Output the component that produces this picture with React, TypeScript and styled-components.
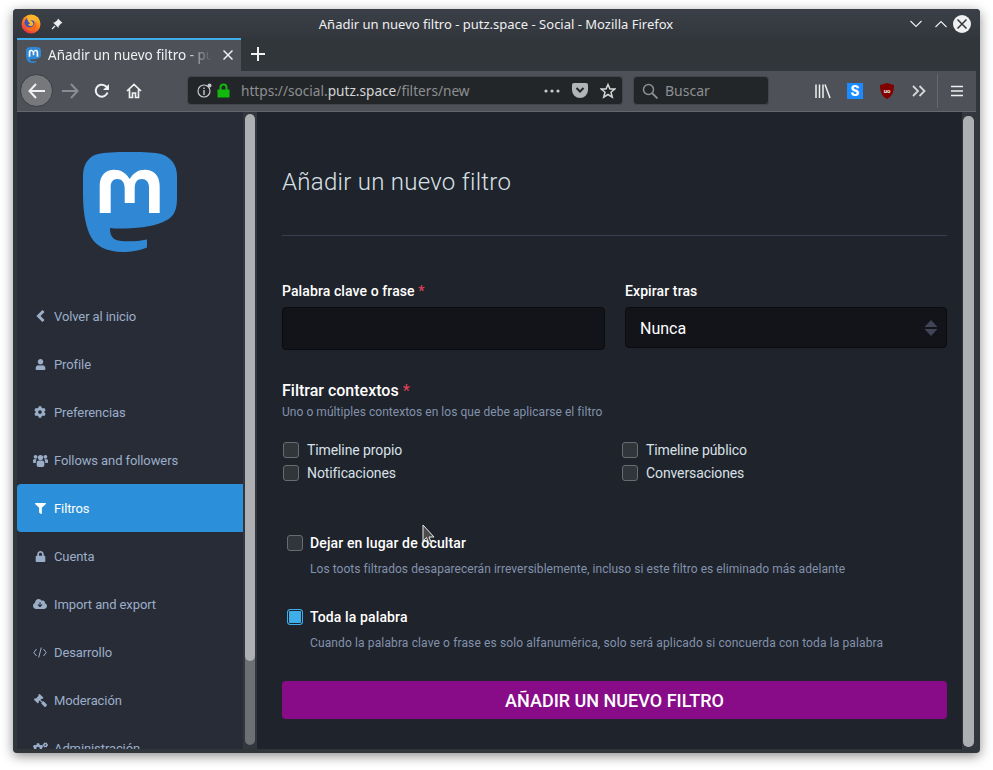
import React from 'react'
import styled, { createGlobalStyle } from 'styled-components'
import { FaCog, FaCogs, FaFilter, FaGavel, FaLock, FaUser } from 'react-icons/fa'
import { FaCloudArrowDown } from 'react-icons/fa6'

const GlobalStyle = createGlobalStyle`
  html, body {
    margin: 0;
    padding: 0;
    background: #fff;
    height: 770px;
    overflow: hidden;
  }
  * { box-sizing: border-box; }
`

const Page = styled.div`
  padding: 9px 13px 17px;
  height: 770px;
  position: relative;
`

const Window = styled.div`
  width: 967px;
  height: 744px;
  display: flex;
  flex-direction: column;
  background: #31363b;
  border-radius: 4px;
  box-shadow: 0 3px 12px rgba(0, 0, 0, 0.45);
  overflow: hidden;
  font-family: Roboto, sans-serif;
`

const TitleBar = styled.div`
  height: 29px;
  flex: none;
  display: flex;
  align-items: center;
  padding: 0 9px 0 8px;
  background: linear-gradient(#3b3f47, #33373d);
  position: relative;
`

const TitleText = styled.div`
  flex: 1;
  text-align: center;
  color: #eff0f1;
  font: 13px 'Noto Sans', sans-serif;
  padding-left: 8px;
  padding-top: 1px;
`

const TitleLeft = styled.div`
  width: 60px;
  display: flex;
  align-items: center;
  gap: 10px;
`

const TitleRight = styled.div`
  width: 68px;
  display: flex;
  align-items: center;
  justify-content: flex-end;
  gap: 6px;
`

const TabStrip = styled.div`
  height: 33px;
  flex: none;
  padding: 0 4px;
  display: flex;
  align-items: stretch;
`

const Tab = styled.div`
  width: 224px;
  background: #4e5157;
  border-top: 2px solid #3daee9;
  display: flex;
  align-items: center;
  padding: 0 8px 2px 9px;
  gap: 7px;
`

const TabTitle = styled.div`
  flex: 1;
  overflow: hidden;
  white-space: nowrap;
  color: #eff0f1;
  font: 13.5px 'Noto Sans', sans-serif;
  margin-right: 4px;
  -webkit-mask-image: linear-gradient(90deg, #000 84%, transparent 100%);
  mask-image: linear-gradient(90deg, #000 84%, transparent 100%);
`

const NewTab = styled.div`
  width: 34px;
  display: flex;
  align-items: center;
  justify-content: center;
  padding-bottom: 2px;
`

const Toolbar = styled.div`
  height: 41px;
  flex: none;
  margin: 0 4px;
  background: #4e5157;
  border-bottom: 1px solid #63666b;
  display: flex;
  align-items: center;
  padding: 0 0 1px 3px;
`

const BackButton = styled.div`
  width: 33px;
  height: 33px;
  margin-right: 1px;
  border-radius: 50%;
  background: #76787c;
  border: 1px solid #3a3d42;
  display: flex;
  align-items: center;
  justify-content: center;
  flex: none;
`

const NavButton = styled.div<{ $width: number }>`
  width: ${p => p.$width}px;
  flex: none;
  display: flex;
  align-items: center;
  justify-content: center;
`

const UrlBar = styled.div`
  width: 436px;
  height: 29px;
  margin-left: 37px;
  flex: none;
  background: #232629;
  border: 1px solid #43464b;
  border-radius: 4px;
  display: flex;
  align-items: center;
  padding: 0 6px 0 9px;
  font: 13.65px 'Noto Sans', sans-serif;
  color: #8d8f92;
`

const UrlText = styled.div`
  flex: 1;
  margin-left: 11px;
  white-space: nowrap;
`

const UrlHost = styled.span`
  color: #d4d5d6;
`

const SearchBar = styled.div`
  width: 136px;
  height: 29px;
  margin-left: 10px;
  flex: none;
  background: #232629;
  border: 1px solid #43464b;
  border-radius: 4px;
  display: flex;
  align-items: center;
  gap: 7px;
  padding-left: 8px;
  font: 14px 'Noto Sans', sans-serif;
  color: #8d8f92;
`

const ToolIcons = styled.div`
  margin-left: 38px;
  display: flex;
  align-items: center;
`

const ToolDivider = styled.div`
  width: 1px;
  height: 34px;
  background: #65686d;
  margin-left: 2px;
`

const Content = styled.div`
  flex: 1;
  min-height: 0;
  margin: 0 4px 4px;
  display: flex;
`

const Sidebar = styled.nav`
  width: 226px;
  flex: none;
  background: #282c37;
  overflow: hidden;
  display: flex;
  flex-direction: column;
  align-items: stretch;
`

const LogoWrap = styled.div`
  height: 180px;
  flex: none;
  padding: 40px 0 0 66px;
`

const NavItem = styled.div<{ $active?: boolean }>`
  height: 48px;
  flex: none;
  display: flex;
  align-items: center;
  padding-left: 15px;
  border-radius: ${p => (p.$active ? '4px 0 0 4px' : '0')};
  background: ${p => (p.$active ? '#2b90d9' : 'transparent')};
  color: ${p => (p.$active ? '#fff' : '#9baec8')};
  font-size: 13px;
  letter-spacing: -0.1px;
`

const NavIcon = styled.span`
  width: 16px;
  margin-right: 6px;
  display: flex;
  justify-content: center;
  font-size: 13px;
`

const MirroredIcon = styled.span`
  display: flex;
  transform: scaleX(-1);
`

const ScrollTrack = styled.div<{ $bg: string; $pad: string; $width: number }>`
  width: ${p => p.$width}px;
  flex: none;
  background: ${p => p.$bg};
  padding: ${p => p.$pad};
  display: flex;
`

const ScrollRail = styled.div`
  flex: 1;
  background: #6c6f73;
  border-radius: 5px;
  overflow: hidden;
  margin-bottom: 2px;
`

const ScrollThumb = styled.div<{ $height: string }>`
  height: ${p => p.$height};
  background: #aeafb3;
  border-radius: 5px;
`

const Main = styled.main`
  flex: 1;
  min-width: 0;
  background: #1f232b;
  padding: 0 15px 0 25px;
`

const Heading = styled.h2`
  margin: 0;
  height: 124px;
  padding-top: 56px;
  border-bottom: 1px solid #393f4f;
  font-size: 24px;
  line-height: 28px;
  font-weight: 300;
  color: #d9e1e8;
  letter-spacing: 0.28px;
`

const FieldRow = styled.div`
  display: grid;
  grid-template-columns: 323px 322px;
  column-gap: 20px;
  margin-top: 46px;
`

const Field = styled.div`
  display: flex;
  flex-direction: column;
`

const FieldLabel = styled.label`
  font-size: 14px;
  line-height: 18px;
  font-weight: 500;
  color: #fff;
  margin-bottom: 7px;
  letter-spacing: 0.1px;
`

const Required = styled.span`
  color: #df405a;
`

const TextInput = styled.div`
  height: 43px;
  background: #131419;
  border: 1px solid #0a0b0e;
  border-radius: 4px;
`

const SelectBox = styled.div`
  height: 41px;
  background: #131419;
  border: 1px solid #0a0b0e;
  border-radius: 4px;
  display: flex;
  align-items: center;
  justify-content: space-between;
  padding: 0 8px 0 14px;
  font-size: 16px;
  line-height: 41px;
  color: #fff;
`

const SelectValue = styled.span`
  padding-top: 1px;
`

const GroupTitle = styled.div`
  margin-top: 31px;
  font-size: 16px;
  line-height: 19px;
  font-weight: 500;
  color: #fff;
`

const Hint = styled.div<{ $spacing?: number }>`
  font-size: 12px;
  line-height: 16px;
  color: #8292ab;
  letter-spacing: ${p => p.$spacing ?? 0}px;
`

const GroupHint = styled(Hint)`
  margin-top: 4px;
`

const CheckGrid = styled.div`
  margin-top: 21px;
  margin-left: 1px;
  display: grid;
  grid-template-columns: 339px 1fr;
  row-gap: 5px;
`

const CheckLabel = styled.div`
  display: flex;
  align-items: center;
  height: 18px;
  font-size: 14px;
  letter-spacing: -0.1px;
  color: #d9e1e8;
  gap: 8px;
`

const Box = styled.span<{ $checked?: boolean }>`
  width: 16px;
  height: 16px;
  flex: none;
  border-radius: 3px;
  border: 1px solid ${p => (p.$checked ? '#3daee9' : '#686b70')};
  background: ${p => (p.$checked ? '#3daee9' : '#31363b')};
  box-shadow: ${p => (p.$checked ? 'inset 0 0 0 1px #1f232b' : 'none')};
`

const Option = styled.div<{ $top: number }>`
  margin: ${p => p.$top}px 0 0 5px;
`

const OptionLabel = styled.div`
  display: flex;
  align-items: center;
  gap: 7px;
  height: 18px;
  font-size: 14px;
  font-weight: 500;
  color: #fff;
  letter-spacing: 0.13px;
`

const OptionHint = styled(Hint)`
  margin: 9px 0 0 23px;
  white-space: nowrap;
`

const SubmitButton = styled.div`
  margin-top: 30px;
  height: 38px;
  border-radius: 4px;
  background: #880b88;
  color: #fff;
  font-size: 18px;
  font-weight: 500;
  display: flex;
  align-items: center;
  justify-content: center;
`

const Cursor = styled.svg`
  position: absolute;
  left: 422px;
  top: 524px;
`

const MastodonLogo = ({ size }: { size: number }) => (
  <svg width={size * 0.94} height={size} viewBox="0 0 94 100">
    <path
      fill="#3088d4"
      d="M47 0C62 0 72 .5 78 2C88 5 94 13 94 24V46C94 58 91 64 84 68C74 74 58 76 42 76.500C36 76.700 31 76.500 27 76C27 83 29 87 35 88.500C44 90 54 89.500 64 87.500V95.500C55 99 47 100 40 100C24 100 11 94 6 81C2 71 0 58 0 42V24C0 12 6 4 15 2C22 .5 32 0 47 0Z"
    />
    <path
      fill="#fff"
      d="M16.700 61V34C16.700 23 23 17.700 31 17.700C38 17.700 43 21 46.700 27C50.400 21 55 17.700 62 17.700C70 17.700 76.700 23 76.700 34V61H66V35C66 30 63 27 59 27C54 27 51.700 30 51.700 37V51H41.700V37C41.700 30 39 27 34 27C30 27 27.700 30 27.700 35V61Z"
    />
  </svg>
)

const FirefoxLogo = () => (
  <svg width="20" height="20" viewBox="0 0 20 20">
    <defs>
      <linearGradient id="fx" x1="0.8" y1="0" x2="0.2" y2="1">
        <stop offset="0" stopColor="#ffd02d" />
        <stop offset="0.5" stopColor="#ff7a1c" />
        <stop offset="1" stopColor="#e5264a" />
      </linearGradient>
    </defs>
    <circle cx="10" cy="10" r="9.500" fill="url(#fx)" />
    <circle cx="8.500" cy="8.500" r="5" fill="#3f55b5" />
    <path fill="#ffb52b" d="M6 2C10 1 15 4 15.500 9C14 7 11.500 6 9.500 6.500C11.500 7.500 13 9 12 11C10.500 13 7.500 12 7 10C8 10.500 9 10 9 9C7 8.500 6 5 6 2Z" />
    <path fill="#f36a1f" d="M5 13C9 16 14.500 13 14.500 8C17 12 14 17.500 9.500 17C7 16.500 5.500 15 5 13Z" />
  </svg>
)

const BackChevron = () => (
  <svg width="9" height="12" viewBox="0 0 9 12">
    <path fill="none" stroke="currentColor" strokeWidth="3" d="M7.500 1L2.500 6L7.500 11" />
  </svg>
)

const GroupIcon = () => (
  <svg width="15" height="13" viewBox="0 0 15 13">
    <g fill="currentColor">
      <circle cx="7.500" cy="3.600" r="2.600" />
      <circle cx="2.600" cy="2.800" r="1.900" />
      <circle cx="12.400" cy="2.800" r="1.900" />
      <path d="M3.700 8.500C3.700 7 5 6.500 7.500 6.500C10 6.500 11.300 7 11.300 8.500V11.500C11.300 12.500 10 13 7.500 13C5 13 3.700 12.500 3.700 11.500Z" />
      <path d="M0 6.500C0 5.500 1 5 3.800 5.500C3 6.500 2.700 7.500 2.700 9H1C.3 9 0 8.500 0 8Z" />
      <path d="M15 6.500C15 5.500 14 5 11.200 5.500C12 6.500 12.300 7.500 12.300 9H14C14.700 9 15 8.500 15 8Z" />
    </g>
  </svg>
)

const CodeIcon = () => (
  <svg width="14" height="11" viewBox="0 0 14 11">
    <path fill="none" stroke="currentColor" strokeWidth="1" d="M3.500 2L.8 5.500L3.500 9M10.500 2L13.200 5.500L10.500 9M8.300 .5L5.700 10.500" />
  </svg>
)

const navItems = [
  { label: 'Volver al inicio', icon: <BackChevron /> },
  { label: 'Profile', icon: <FaUser size={11} /> },
  { label: 'Preferencias', icon: <FaCog size={12} /> },
  { label: 'Follows and followers', icon: <GroupIcon /> },
  { label: 'Filtros', icon: <FaFilter size={11} />, active: true },
  { label: 'Cuenta', icon: <FaLock size={11} /> },
  { label: 'Import and export', icon: <FaCloudArrowDown size={14} /> },
  { label: 'Desarrollo', icon: <CodeIcon /> },
  {
    label: 'Moderación',
    icon: (
      <MirroredIcon>
        <FaGavel size={13} />
      </MirroredIcon>
    ),
  },
  { label: 'Administración', icon: <FaCogs size={15} /> },
]

export default function App() {
  return (
    <>
      <GlobalStyle />
      <Page>
        <Window>
          <TitleBar>
            <TitleLeft>
              <FirefoxLogo />
              <svg width="12" height="12" viewBox="0 0 12 12">
                <path fill="#eee" d="M7 0.500L11.500 5L10 5.500L7.500 8.500L7.500 10L2 4.500L3.500 4.500L6.500 2Z" />
                <path stroke="#eee" strokeWidth="1.300" d="M4 8L1 11" />
              </svg>
            </TitleLeft>
            <TitleText>Añadir un nuevo filtro - putz.space - Social - Mozilla Firefox</TitleText>
            <TitleRight>
              <svg width="12" height="8" viewBox="0 0 12 8">
                <path fill="none" stroke="#eff0f1" strokeWidth="1.100" d="M.5 1L6 6.500L11.500 1" />
              </svg>
              <svg width="12" height="8" viewBox="0 0 12 8" style={{ marginLeft: 7 }}>
                <path fill="none" stroke="#eff0f1" strokeWidth="1.100" d="M.5 7L6 1.500L11.500 7" />
              </svg>
              <svg width="18" height="18" viewBox="0 0 18 18">
                <circle cx="9" cy="9" r="9" fill="#eff0f1" />
                <path stroke="#31363b" strokeWidth="1.500" d="M4.500 4.500L13.500 13.500M13.500 4.500L4.500 13.500" />
              </svg>
            </TitleRight>
          </TitleBar>

          <TabStrip>
            <Tab>
              <MastodonLogo size={16} />
              <TabTitle>Añadir un nuevo filtro - putz.space</TabTitle>
              <svg width="10" height="10" viewBox="0 0 10 10">
                <path stroke="#eff0f1" strokeWidth="1.500" d="M.5 .5L9.500 9.500M9.500 .5L.5 9.500" />
              </svg>
            </Tab>
            <NewTab>
              <svg width="14" height="14" viewBox="0 0 14 14">
                <path stroke="#eff0f1" strokeWidth="2" d="M7 0V14M0 7H14" />
              </svg>
            </NewTab>
          </TabStrip>

          <Toolbar>
            <BackButton>
              <svg width="18" height="16" viewBox="0 0 18 16">
                <path fill="none" stroke="#eff0f1" strokeWidth="2" d="M8 1L1.500 8L8 15M1.500 8H17" />
              </svg>
            </BackButton>
            <NavButton $width={32}>
              <svg width="18" height="16" viewBox="0 0 18 16">
                <path fill="none" stroke="#8b8d90" strokeWidth="2" d="M10 1L16.500 8L10 15M16.500 8H1" />
              </svg>
            </NavButton>
            <NavButton $width={32}>
              <svg width="16" height="16" viewBox="0 0 16 16">
                <path fill="none" stroke="#eff0f1" strokeWidth="2" d="M13.500 9.500A6 6 0 1 1 11.500 3L14 5" />
                <path fill="#eff0f1" d="M15 1V7H9Z" />
              </svg>
            </NavButton>
            <NavButton $width={32}>
              <svg width="16" height="16" viewBox="0 0 16 16">
                <path fill="none" stroke="#eff0f1" strokeWidth="1.700" d="M1 8L8 1.500L15 8M3.500 6.500V14.500H6.500V10H9.500V14.500H12.500V6.500" />
              </svg>
            </NavButton>

            <UrlBar>
              <svg width="15" height="15" viewBox="0 0 15 15">
                <circle cx="7" cy="8" r="6" fill="none" stroke="#c8c9ca" strokeWidth="1.200" />
                <path stroke="#c8c9ca" strokeWidth="1.400" d="M7 7V12M7 4.500V6" />
                <circle cx="12.500" cy="2.500" r="2" fill="#c8c9ca" />
              </svg>
              <svg width="13" height="15" viewBox="0 0 13 15" style={{ marginLeft: 5 }}>
                <path fill="none" stroke="#12b80e" strokeWidth="2" d="M3.500 7V4.500A3 3 0 0 1 9.500 4.500V7" />
                <rect x="0.500" y="6.500" width="12" height="8" fill="#12b80e" />
              </svg>
              <UrlText>
                https://social.<UrlHost>putz.space</UrlHost>/filters/new
              </UrlText>
              <svg width="16" height="4" viewBox="0 0 16 4">
                <circle cx="2" cy="2" r="1.600" fill="#c8c9ca" />
                <circle cx="8" cy="2" r="1.600" fill="#c8c9ca" />
                <circle cx="14" cy="2" r="1.600" fill="#c8c9ca" />
              </svg>
              <svg width="16" height="15" viewBox="0 0 16 15" style={{ marginLeft: 12 }}>
                <path fill="#b3b4b5" d="M2 0H14A2 2 0 0 1 16 2V7A8 8 0 0 1 0 7V2A2 2 0 0 1 2 0Z" />
                <path fill="none" stroke="#232629" strokeWidth="2" d="M4.500 5L8 8.500L11.500 5" />
              </svg>
              <svg width="16" height="16" viewBox="0 0 16 16" style={{ marginLeft: 12 }}>
                <path fill="none" stroke="#d4d5d6" strokeWidth="1.500" d="M8 1.500L10 6H14.800L11 9.200L12.300 14.200L8 11.500L3.700 14.200L5 9.200L1.200 6H6Z" />
              </svg>
            </UrlBar>

            <SearchBar>
              <svg width="16" height="16" viewBox="0 0 16 16">
                <circle cx="6.500" cy="6.500" r="5" fill="none" stroke="#8d8f92" strokeWidth="1.500" />
                <path stroke="#8d8f92" strokeWidth="1.800" d="M10 10L15.500 15.500" />
              </svg>
              Buscar
            </SearchBar>

            <ToolIcons>
              <NavButton $width={32}>
                <svg width="16" height="16" viewBox="0 0 16 16">
                  <path stroke="#eff0f1" strokeWidth="1.500" d="M1 1.500V15M4.500 1.500V15M8 1.500V15M10 1.500L15 15" />
                </svg>
              </NavButton>
              <NavButton $width={32}>
                <svg width="16" height="16" viewBox="0 0 16 16">
                  <rect width="16" height="16" fill="#1a8cff" />
                  <text x="8" y="13" textAnchor="middle" fontFamily="Roboto" fontWeight="900" fontSize="14" fill="#fff">
                    S
                  </text>
                </svg>
              </NavButton>
              <NavButton $width={32}>
                <svg width="14" height="16" viewBox="0 0 14 16">
                  <path fill="#800000" d="M7 0L14 2C14 9 12 13.500 7 16C2 13.500 0 9 0 2Z" />
                  <text x="7" y="9.500" textAnchor="middle" fontFamily="Roboto" fontWeight="700" fontSize="6" fill="#eee">
                    uo
                  </text>
                </svg>
              </NavButton>
              <NavButton $width={32}>
                <svg width="14" height="12" viewBox="0 0 14 12">
                  <path fill="none" stroke="#d6d7d8" strokeWidth="1.800" d="M1 1L6 6L1 11M7.500 1L12.500 6L7.500 11" />
                </svg>
              </NavButton>
              <ToolDivider />
              <NavButton $width={38}>
                <svg width="12" height="12" viewBox="0 0 12 12">
                  <path stroke="#eff0f1" strokeWidth="1.600" d="M0 1.500H12M0 6H12M0 10.500H12" />
                </svg>
              </NavButton>
            </ToolIcons>
          </Toolbar>

          <Content>
            <Sidebar>
              <LogoWrap>
                <MastodonLogo size={100} />
              </LogoWrap>
              {navItems.map(item => (
                <NavItem key={item.label} $active={item.active}>
                  <NavIcon>{item.icon}</NavIcon>
                  {item.label}
                </NavItem>
              ))}
            </Sidebar>
            <ScrollTrack $bg="#33373d" $width={14} $pad="2px">
              <ScrollRail>
                <ScrollThumb $height="547px" />
              </ScrollRail>
            </ScrollTrack>
            <Main>
              <Heading>Añadir un nuevo filtro</Heading>
              <FieldRow>
                <Field>
                  <FieldLabel>
                    Palabra clave o frase <Required>*</Required>
                  </FieldLabel>
                  <TextInput />
                </Field>
                <Field>
                  <FieldLabel>Expirar tras</FieldLabel>
                  <SelectBox>
                    <SelectValue>Nunca</SelectValue>
                    <svg width="14" height="16" viewBox="0 0 14 16">
                      <path fill="#3f4556" d="M7 0L13.500 7H.5ZM.5 9H13.500L7 16Z" />
                    </svg>
                  </SelectBox>
                </Field>
              </FieldRow>

              <GroupTitle>
                Filtrar contextos <Required>*</Required>
              </GroupTitle>
              <GroupHint $spacing={0.05}>Uno o múltiples contextos en los que debe aplicarse el filtro</GroupHint>
              <CheckGrid>
                <CheckLabel>
                  <Box />
                  Timeline propio
                </CheckLabel>
                <CheckLabel>
                  <Box />
                  Timeline público
                </CheckLabel>
                <CheckLabel>
                  <Box />
                  Notificaciones
                </CheckLabel>
                <CheckLabel>
                  <Box />
                  Conversaciones
                </CheckLabel>
              </CheckGrid>

              <Option $top={52}>
                <OptionLabel>
                  <Box />
                  Dejar en lugar de ocultar
                </OptionLabel>
                <OptionHint $spacing={0.05}>
                  Los toots filtrados desaparecerán irreversiblemente, incluso si este filtro es eliminado más adelante
                </OptionHint>
              </Option>
              <Option $top={31}>
                <OptionLabel>
                  <Box $checked />
                  Toda la palabra
                </OptionLabel>
                <OptionHint $spacing={0.125}>
                  Cuando la palabra clave o frase es solo alfanumérica, solo será aplicado si concuerda con toda la palabra
                </OptionHint>
              </Option>

              <SubmitButton>AÑADIR UN NUEVO FILTRO</SubmitButton>
            </Main>
            <ScrollTrack $bg="#33373d" $width={14} $pad="4px 2px 0 1px">
              <ScrollRail>
                <ScrollThumb $height="100%" />
              </ScrollRail>
            </ScrollTrack>
          </Content>
        </Window>
        <Cursor width="14" height="22" viewBox="0 0 14 22">
          <path fill="#4a4b4d" stroke="#e8e8e8" d="M1 1V17L4.500 13.500L7 20L9.500 19L7 13H12Z" />
        </Cursor>
      </Page>
    </>
  )
}
